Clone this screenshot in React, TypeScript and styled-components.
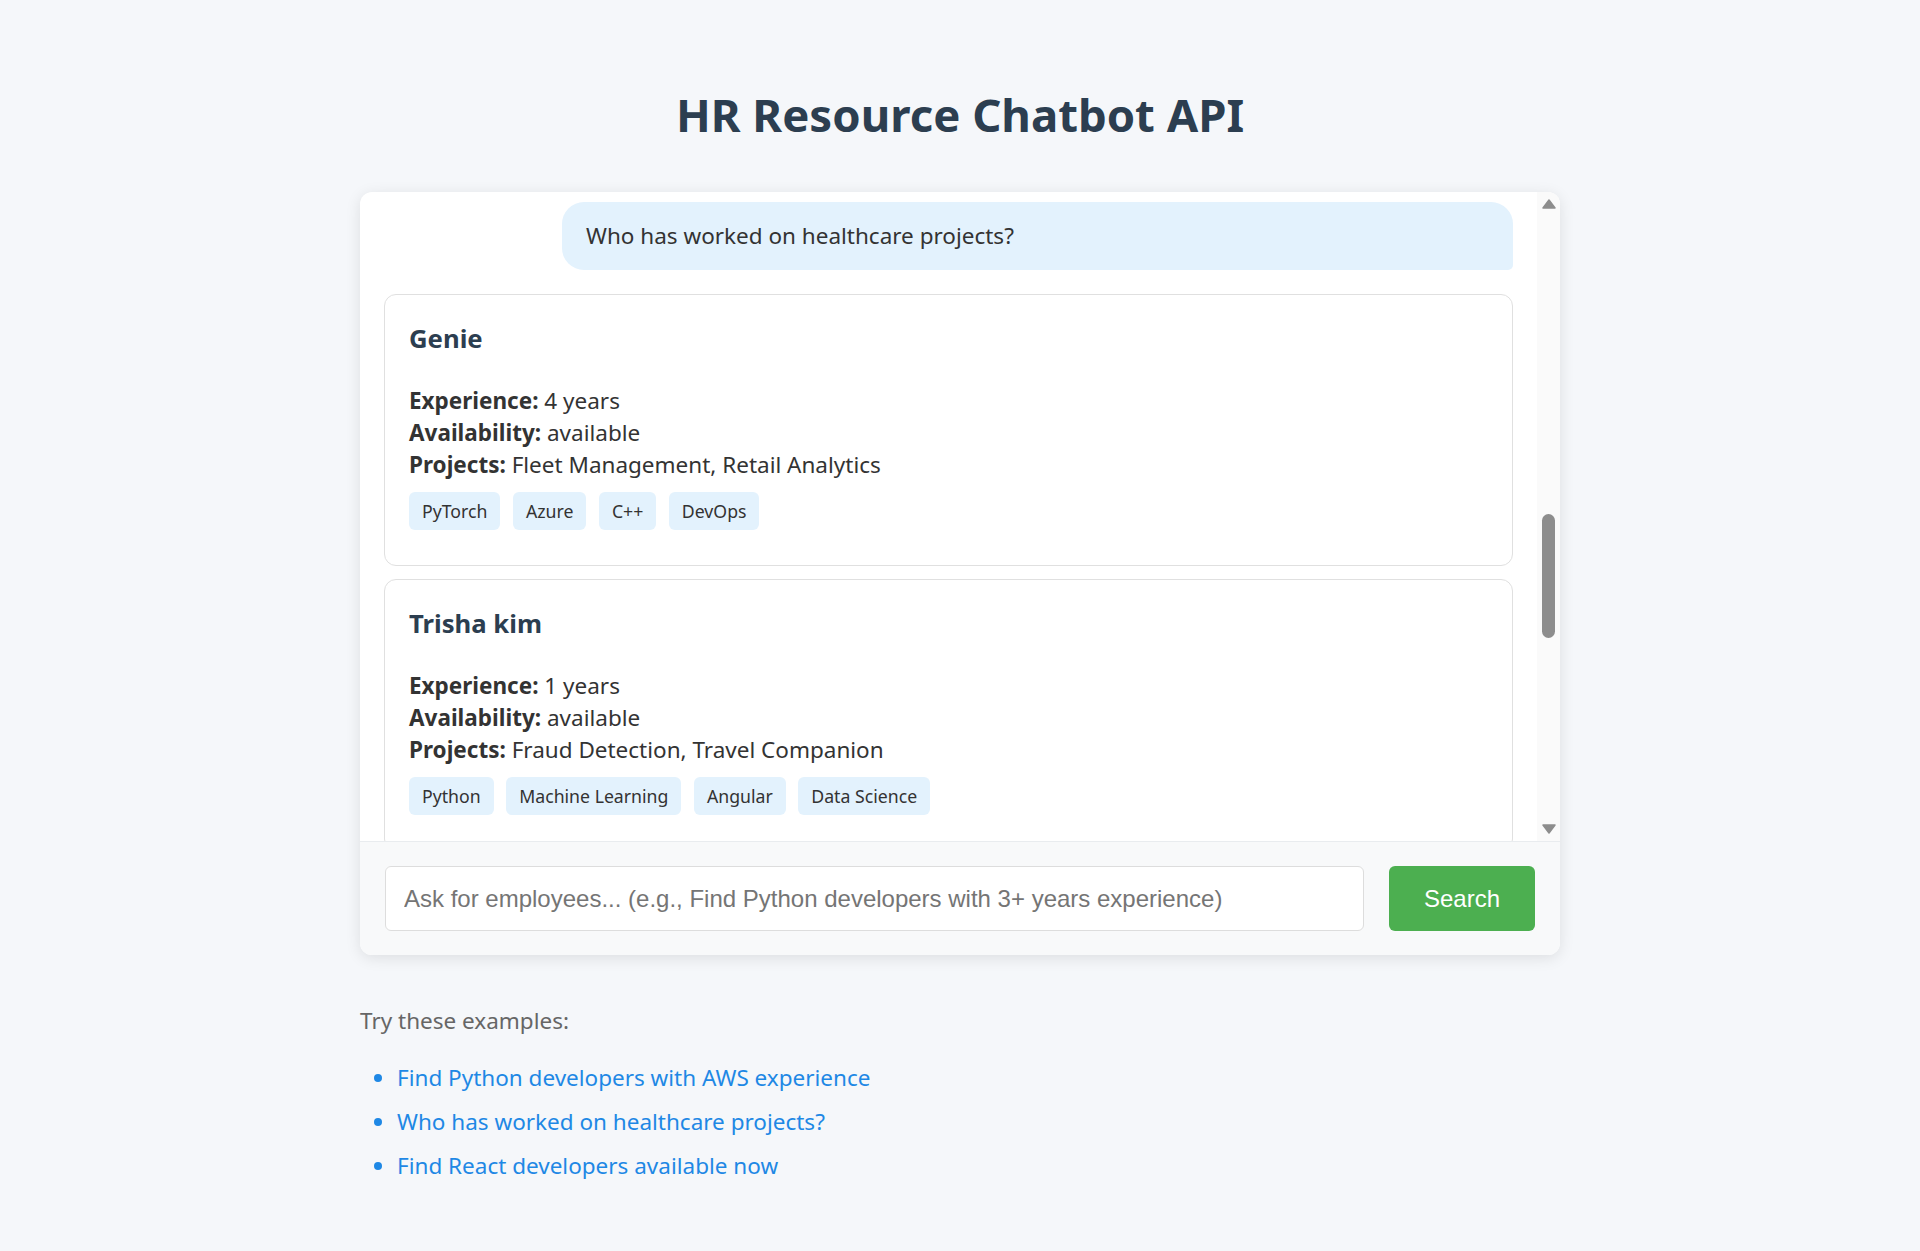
import React from "react";
import styled, { createGlobalStyle } from "styled-components";

const GlobalStyle = createGlobalStyle`
  html, body {
    margin: 0;
    padding: 0;
    background: #f5f7fa;
  }
  body {
    font-family: "Noto Sans", "Open Sans", sans-serif;
    color: #333;
  }
  * { box-sizing: border-box; }
`;

const Page = styled.div`
  max-width: 1200px;
  margin: 0 auto;
  padding: 86px 0 60px;
`;

const Title = styled.h1`
  margin: 0 0 50px;
  font-size: 45.5px;
  line-height: 56px;
  font-weight: 700;
  color: #2c3e50;
  text-align: center;
`;

const ChatCard = styled.section`
  background: #fff;
  border-radius: 12px;
  box-shadow: 0 3px 15px rgba(0, 0, 0, 0.1);
  overflow: hidden;
`;

const MessagesRow = styled.div`
  display: flex;
  height: 649px;
`;

const Messages = styled.div`
  flex: 1;
  min-width: 0;
  overflow: hidden;
  padding: 10px 24px 0;
  display: flex;
  flex-direction: column;
`;

const UserBubble = styled.div`
  align-self: flex-end;
  width: 951px;
  padding: 18px 24px;
  margin-bottom: 24px;
  background: #e3f2fd;
  border-radius: 22px 22px 5px 22px;
  font-size: 22.5px;
  line-height: 32px;
  color: #333;
`;

const EmployeeCard = styled.article`
  flex-shrink: 0;
  border: 1px solid #e0e0e0;
  border-radius: 12px;
  padding: 27px 24px 35px;
  margin-bottom: 13px;
  background: #fff;
`;

const Name = styled.h3`
  margin: 0 0 29px;
  font-size: 25.7px;
  line-height: 34px;
  font-weight: 700;
  color: #2c3e50;
`;

const Detail = styled.div`
  font-size: 22.5px;
  line-height: 32px;
  color: #333;
`;

const Label = styled.strong`
  font-weight: 700;
`;

const Tags = styled.div`
  display: flex;
  flex-wrap: wrap;
  gap: 12.5px;
  margin-top: 11px;
`;

const Tag = styled.span`
  padding: 6px 13px;
  background: #e3f2fd;
  border-radius: 6px;
  font-size: 17.7px;
  line-height: 26px;
  color: #333;
`;

const Scrollbar = styled.div`
  width: 23px;
  flex-shrink: 0;
  background: #fafafa;
  display: flex;
  flex-direction: column;
  align-items: center;
  padding: 7px 0;
`;

const Track = styled.div`
  flex: 1;
  width: 100%;
  display: flex;
  justify-content: center;
`;

const Thumb = styled.div<{ $offset: number; $size: number }>`
  width: 13px;
  height: ${(p) => p.$size}px;
  margin-top: ${(p) => p.$offset}px;
  border-radius: 7px;
  background: #8d8d8d;
`;

const Arrow = styled.svg`
  display: block;
  flex-shrink: 0;
`;

const InputBar = styled.form`
  display: flex;
  gap: 25px;
  padding: 24px 25px;
  background: #f8f9fa;
  border-top: 1px solid #e9ecef;
`;

const QueryInput = styled.input`
  flex: 1;
  height: 65px;
  padding: 0 18px;
  border: 1px solid #ddd;
  border-radius: 6px;
  background: #fff;
  font-family: "Liberation Sans", Arial, sans-serif;
  font-size: 24px;
  color: #333;
  outline: none;
  &::placeholder {
    color: #757575;
  }
`;

const SearchButton = styled.button`
  width: 146px;
  height: 65px;
  border: none;
  border-radius: 6px;
  background: #4caf50;
  color: #fff;
  font-family: "Liberation Sans", Arial, sans-serif;
  font-size: 24px;
  cursor: pointer;
`;

const Examples = styled.div`
  margin-top: 50px;
`;

const ExamplesLabel = styled.p`
  margin: 0;
  font-size: 22.5px;
  line-height: 32px;
  color: #666;
`;

const ExampleList = styled.ul`
  margin: 25px 0 0;
  padding-left: 37px;
`;

const ExampleItem = styled.li`
  margin-bottom: 12px;
  font-size: 22.5px;
  line-height: 32px;
  color: #1e88e5;
`;

const ExampleLink = styled.a`
  color: inherit;
  text-decoration: none;
  cursor: pointer;
`;

type Employee = {
  name: string;
  experience: number;
  availability: string;
  projects: string[];
  skills: string[];
};

const employees: Employee[] = [
  {
    name: "Genie",
    experience: 4,
    availability: "available",
    projects: ["Fleet Management", "Retail Analytics"],
    skills: ["PyTorch", "Azure", "C++", "DevOps"],
  },
  {
    name: "Trisha kim",
    experience: 1,
    availability: "available",
    projects: ["Fraud Detection", "Travel Companion"],
    skills: ["Python", "Machine Learning", "Angular", "Data Science"],
  },
];

const examples = [
  "Find Python developers with AWS experience",
  "Who has worked on healthcare projects?",
  "Find React developers available now",
];

function UpArrow() {
  return (
    <Arrow width="14" height="10" viewBox="0 0 14 10">
      <path d="M7 1 L13 9 L1 9 Z" fill="#8d8d8d" stroke="#8d8d8d" strokeWidth="1.5" strokeLinejoin="round" />
    </Arrow>
  );
}

function DownArrow() {
  return (
    <Arrow width="14" height="10" viewBox="0 0 14 10">
      <path d="M1 1 L13 1 L7 9 Z" fill="#8d8d8d" stroke="#8d8d8d" strokeWidth="1.5" strokeLinejoin="round" />
    </Arrow>
  );
}

function EmployeeResult({ e }: { e: Employee }) {
  return (
    <EmployeeCard>
      <Name>{e.name}</Name>
      <Detail>
        <Label>Experience:</Label> {e.experience} years
      </Detail>
      <Detail>
        <Label>Availability:</Label> {e.availability}
      </Detail>
      <Detail>
        <Label>Projects:</Label> {e.projects.join(", ")}
      </Detail>
      <Tags>
        {e.skills.map((s) => (
          <Tag key={s}>{s}</Tag>
        ))}
      </Tags>
    </EmployeeCard>
  );
}

export default function App() {
  return (
    <>
      <GlobalStyle />
      <Page>
        <Title>HR Resource Chatbot API</Title>
        <ChatCard>
          <MessagesRow>
            <Messages>
              <UserBubble>Who has worked on healthcare projects?</UserBubble>
              {employees.map((e) => (
                <EmployeeResult key={e.name} e={e} />
              ))}
            </Messages>
            <Scrollbar>
              <UpArrow />
              <Track>
                <Thumb $offset={305} $size={124} />
              </Track>
              <DownArrow />
            </Scrollbar>
          </MessagesRow>
          <InputBar onSubmit={(ev) => ev.preventDefault()}>
            <QueryInput placeholder="Ask for employees... (e.g., Find Python developers with 3+ years experience)" />
            <SearchButton type="submit">Search</SearchButton>
          </InputBar>
        </ChatCard>
        <Examples>
          <ExamplesLabel>Try these examples:</ExamplesLabel>
          <ExampleList>
            {examples.map((x) => (
              <ExampleItem key={x}>
                <ExampleLink>{x}</ExampleLink>
              </ExampleItem>
            ))}
          </ExampleList>
        </Examples>
      </Page>
    </>
  );
}
